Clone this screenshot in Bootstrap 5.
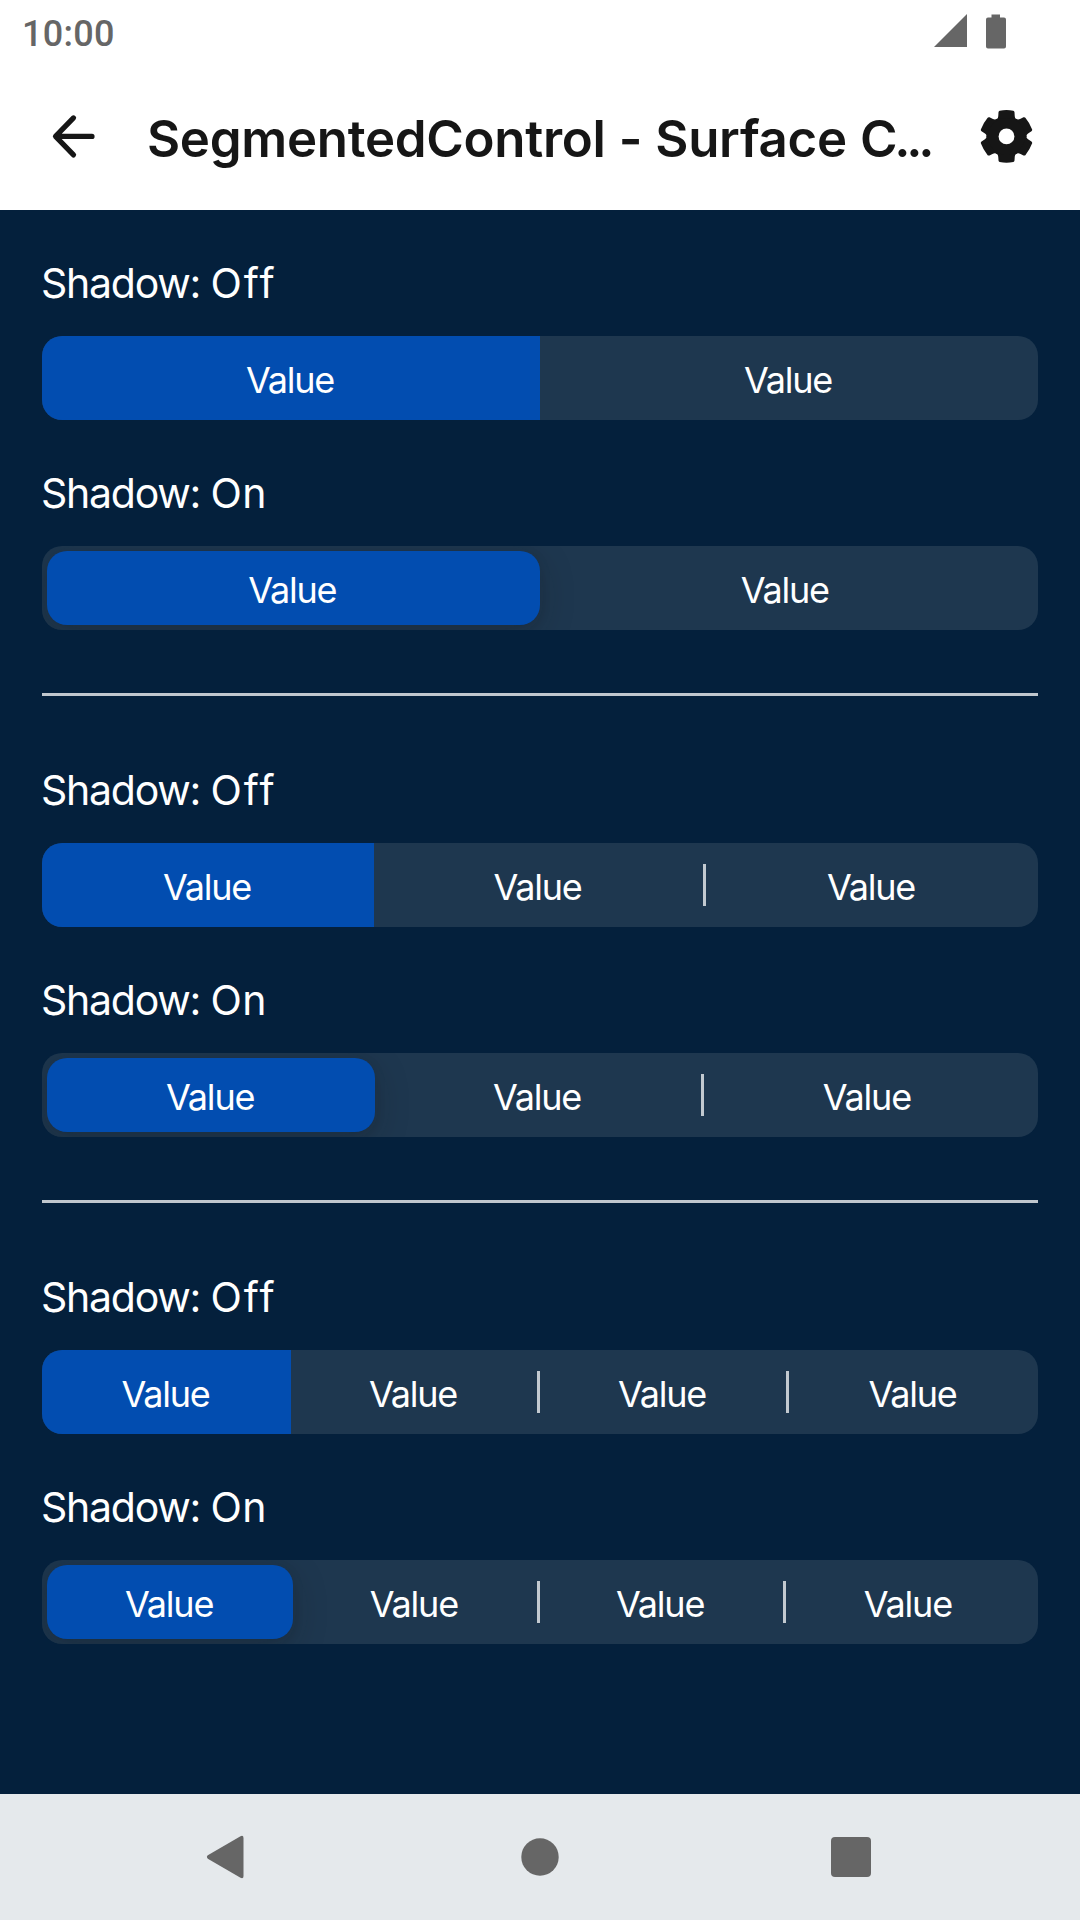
<!DOCTYPE html>
<html lang="en">
<head>
<meta charset="utf-8">
<meta name="viewport" content="width=device-width, initial-scale=1">
<title>SegmentedControl - Surface C...</title>
<link href="https://cdn.jsdelivr.net/npm/bootstrap@5.3.0/dist/css/bootstrap.min.css" rel="stylesheet">
<style>
  body { font-family: Inter, "Noto Sans", sans-serif; background: #04203c; color: #fff; height: 1920px; }
  .statusbar { height: 66px; padding: 0 74px 4px 22px; color: #666; font: 500 36px/62px Roboto, sans-serif; letter-spacing: .3px; }
  .statusbar span { padding-top: 5px; }
  .appbar { height: 144px; padding: 0 44px 4px 49px; color: #161616; }
  .appbar-title { font-size: 51px; font-weight: 600; line-height: 64px; letter-spacing: -.3px; word-spacing: .6px; white-space: nowrap; margin: 6px 0 0 51px; }
  .dots { letter-spacing: -4.200px; margin-left: -3px; }
  .stage { padding: 42px 42px 0; }
  .seg-label { font-size: 41px; line-height: 60px; padding-top: 1px; height: 60px; margin-bottom: 24px; letter-spacing: -1.250px; margin-left: -1px; }
  .word-on { letter-spacing: .4px; }
  .word-off { letter-spacing: 2.100px; }
  .seg { display: grid; grid-auto-flow: column; grid-auto-columns: minmax(0, 1fr); height: 84px; border-radius: 20px; background: #1e374f; margin-bottom: 42px; overflow: hidden; }
  .seg > div { font-size: 36px; line-height: 36px; letter-spacing: -1.200px; padding: 4px 2px 0 0; position: relative; }
  .seg .on { background: #024db0; }
  .seg .bar { padding-right: 5px; }
  .seg .bar::after { content: ""; position: absolute; right: 0; top: 50%; width: 3px; height: 42px; margin-top: -21px; background: #c2c9d0; }
  .seg.raised { padding: 5px 6px 5px 5px; }
  .raised .on { border-radius: 20px; box-shadow: 0 9px 36px rgba(27,27,27,.2), 0 3px 12px rgba(27,27,27,.12); }
  .rule { height: 3px; background: #c0c7ce; margin: 63px 0; }
  .navkeys { height: 126px; background: #e5e9ec; }
</style>
</head>
<body class="d-flex flex-column overflow-hidden">
<header class="bg-white">
  <div class="statusbar d-flex align-items-center justify-content-between">
    <span>10:00</span>
    <svg width="72" height="36" viewBox="0 0 72 36" fill="#666"><path d="M0 34 33 1V34zM57.500 1.500h8.500V4.500h4a2 2 0 0 1 2 2V33.500a2 2 0 0 1-2 2H54a2 2 0 0 1-2-2V6.500a2 2 0 0 1 2-2h3.500z"/></svg>
  </div>
  <div class="appbar d-flex align-items-center">
    <svg class="flex-shrink-0" width="47" height="48" viewBox="0 0 47 48" fill="none" stroke="#161616" stroke-width="5.200" stroke-linecap="round" stroke-linejoin="round"><path d="M24.500 5.900 6.500 24.400 24.500 42.900M7 24.400H43"/></svg>
    <div class="appbar-title">SegmentedControl - Surface C<span class="dots">...</span></div>
    <svg class="ms-auto flex-shrink-0" width="58" height="58" viewBox="-28.500 -29.400 58 58" fill="#161616">
      <defs><path id="tooth" d="M0 0-10.500-17C-8.600-17.900-8.300-19-8.200-21L-8-24.200Q-7.800-25.400-6.800-25.700Q0-26.900 6.800-25.700Q7.800-25.400 8-24.200L8.200-21C8.300-19 8.600-17.900 10.500-17z"/></defs>
      <use href="#tooth"/><use href="#tooth" transform="rotate(60)"/><use href="#tooth" transform="rotate(120)"/><use href="#tooth" transform="rotate(180)"/><use href="#tooth" transform="rotate(240)"/><use href="#tooth" transform="rotate(300)"/>
      <circle r="18.500"/><circle r="7.900" fill="#fff"/>
    </svg>
  </div>
</header>
<main class="stage flex-grow-1">
  <section>
    <div class="seg-label">Shadow: <span class="word-off">Off</span></div>
    <div class="seg"><div class="on d-flex align-items-center justify-content-center">Value</div><div class="d-flex align-items-center justify-content-center">Value</div></div>
    <div class="seg-label">Shadow: <span class="word-on">On</span></div>
    <div class="seg raised mb-0"><div class="on d-flex align-items-center justify-content-center">Value</div><div class="d-flex align-items-center justify-content-center">Value</div></div>
  </section>
  <div class="rule"></div>
  <section>
    <div class="seg-label">Shadow: <span class="word-off">Off</span></div>
    <div class="seg"><div class="on d-flex align-items-center justify-content-center">Value</div><div class="bar d-flex align-items-center justify-content-center">Value</div><div class="d-flex align-items-center justify-content-center">Value</div></div>
    <div class="seg-label">Shadow: <span class="word-on">On</span></div>
    <div class="seg raised mb-0"><div class="on d-flex align-items-center justify-content-center">Value</div><div class="bar d-flex align-items-center justify-content-center">Value</div><div class="d-flex align-items-center justify-content-center">Value</div></div>
  </section>
  <div class="rule"></div>
  <section>
    <div class="seg-label">Shadow: <span class="word-off">Off</span></div>
    <div class="seg"><div class="on d-flex align-items-center justify-content-center">Value</div><div class="bar d-flex align-items-center justify-content-center">Value</div><div class="bar d-flex align-items-center justify-content-center">Value</div><div class="d-flex align-items-center justify-content-center">Value</div></div>
    <div class="seg-label">Shadow: <span class="word-on">On</span></div>
    <div class="seg raised mb-0"><div class="on d-flex align-items-center justify-content-center">Value</div><div class="bar d-flex align-items-center justify-content-center">Value</div><div class="bar d-flex align-items-center justify-content-center">Value</div><div class="d-flex align-items-center justify-content-center">Value</div></div>
  </section>
</main>
<footer class="navkeys d-flex justify-content-center align-items-center">
  <svg width="668" height="44" viewBox="-2 0 668 44" fill="#666"><path d="M-.2 20.300 32.500 1.200Q35.500-.1 35.500 3V41Q35.500 44.100 32.500 42.800L-.2 23.700Q-2 22-.2 20.300z"/><circle cx="332" cy="22" r="18.700"/><rect x="623" y="2" width="40" height="40" rx="4"/></svg>
</footer>
<script src="https://cdn.jsdelivr.net/npm/bootstrap@5.3.0/dist/js/bootstrap.bundle.min.js"></script>
</body>
</html>
